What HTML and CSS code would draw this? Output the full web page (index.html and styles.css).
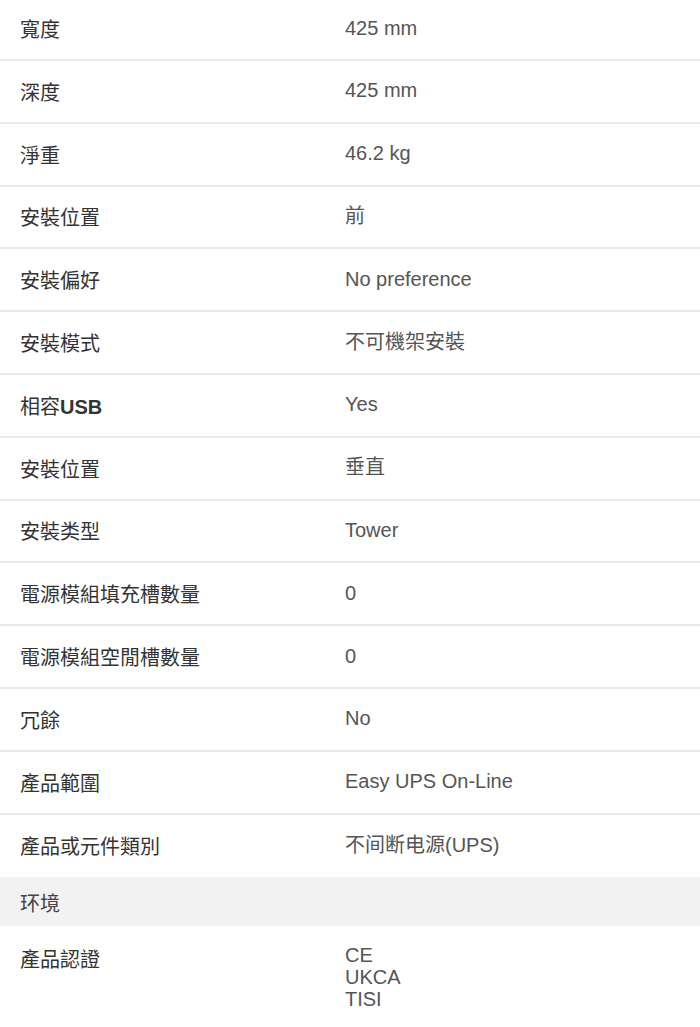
FILE: index.html
```html
<!DOCTYPE html>
<html lang="zh-Hant">
<head>
<meta charset="utf-8">
<title>規格</title>
<link rel="stylesheet" href="styles.css">
</head>
<body>
<div class="specs">
  <div class="row"><div class="label">寬度</div><div class="value">425 mm</div></div>
  <div class="row"><div class="label">深度</div><div class="value">425 mm</div></div>
  <div class="row"><div class="label">淨重</div><div class="value">46.2 kg</div></div>
  <div class="row"><div class="label">安裝位置</div><div class="value">前</div></div>
  <div class="row"><div class="label">安裝偏好</div><div class="value">No preference</div></div>
  <div class="row"><div class="label">安裝模式</div><div class="value">不可機架安裝</div></div>
  <div class="row"><div class="label">相容<span class="latin">USB</span></div><div class="value">Yes</div></div>
  <div class="row"><div class="label">安裝位置</div><div class="value">垂直</div></div>
  <div class="row"><div class="label">安裝类型</div><div class="value">Tower</div></div>
  <div class="row"><div class="label">電源模組填充槽數量</div><div class="value">0</div></div>
  <div class="row"><div class="label">電源模組空閒槽數量</div><div class="value">0</div></div>
  <div class="row"><div class="label">冗餘</div><div class="value">No</div></div>
  <div class="row"><div class="label">產品範圍</div><div class="value">Easy UPS On-Line</div></div>
  <div class="row group-end"><div class="label">產品或元件類別</div><div class="value">不间断电源(UPS)</div></div>
  <div class="section">环境</div>
  <div class="row multi"><div class="label">產品認證</div><div class="value">CE<br>UKCA<br>TISI</div></div>
</div>
</body>
</html>
```
FILE: styles.css
```css
html, body {
  margin: 0;
  padding: 0;
  background: #ffffff;
}
body {
  font-family: "Liberation Sans", "Noto Sans CJK TC", sans-serif;
  font-size: 20px;
  overflow: hidden;
}
.specs {
  margin-top: -1.8px;
}
.row {
  display: grid;
  grid-template-columns: 325px 1fr;
  align-items: center;
  height: 60.8px;
  border-bottom: 2px solid #e9e9e9;
}
.row.group-end {
  height: 62.8px;
  border-bottom: none;
}
.label {
  padding-left: 20px;
  color: #333333;
  line-height: 24px;
  padding-top: 3px;
}
.latin {
  font-weight: 700;
}
.value {
  padding-left: 20px;
  color: #555555;
  line-height: 24px;
  padding-bottom: 2px;
}
.section {
  background: #f2f2f2;
  height: 49px;
  display: flex;
  align-items: center;
  padding-left: 20px;
  padding-top: 1px;
  box-sizing: border-box;
  color: #444444;
}
.row.multi {
  height: auto;
  align-items: start;
  border-bottom: none;
  padding-top: 18px;
}
.row.multi .label {
  padding-top: 4px;
}
.row.multi .value {
  line-height: 22px;
}
```
